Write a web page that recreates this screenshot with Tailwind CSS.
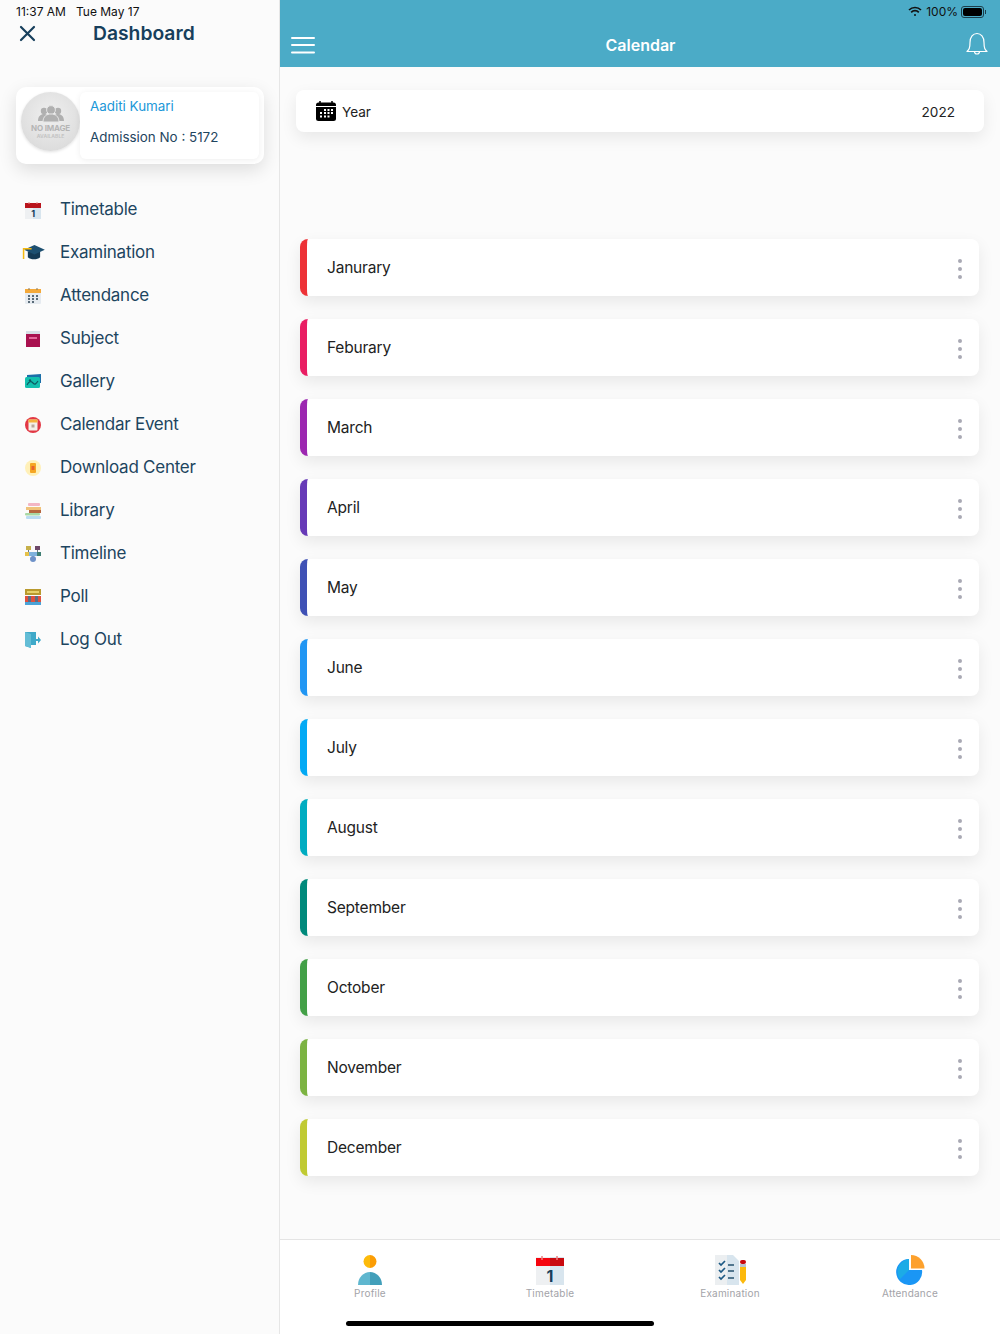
<!DOCTYPE html>
<html lang="en">

<head>
    <meta charset="UTF-8" />
    <meta name="viewport" content="width=device-width, initial-scale=1" />
    <title>Calendar</title>
    <script src="https://cdn.jsdelivr.net/npm/@tailwindcss/browser@4"></script>
</head>

<body class="relative w-[1000px] h-[1334px] overflow-hidden flex bg-[#fbfbfb] font-['Inter',sans-serif] text-[#222]">

    <!-- sidebar -->
    <aside class="w-[280px] h-full shrink-0 border-r border-[#e6e6e6] bg-[#fbfbfb] flex flex-col">
        <div class="h-[24px] pl-4 pt-[4px] flex gap-[10px] text-[12px] leading-[15px] text-[#111]">
            <span>11:37 AM</span>
            <span>Tue May 17</span>
        </div>
        <div class="h-[20px] mt-[-1px] pl-[19px] flex items-center">
            <svg width="17" height="17" viewBox="0 0 17 17" fill="none" stroke="#173f5c" stroke-width="2.2" stroke-linecap="round">
                <path d="M2 2L15 15M15 2L2 15" />
            </svg>
            <span class="ml-[57px] text-[19.3px] leading-[24px] font-semibold text-[#173f5c]">Dashboard</span>
        </div>

        <div class="mt-[44px] mx-4 w-[248px] h-[77px] rounded-[10px] bg-white shadow-[0_6px_18px_rgba(0,0,0,0.12)] flex pl-[5px] pt-[5px]">
            <div class="w-[59px] h-[59px] rounded-full bg-[radial-gradient(circle_at_50%_40%,#f0f0f0,#d6d6d6)] shadow-[0_1px_3px_rgba(0,0,0,0.12)] flex flex-col items-center pt-[13px] shrink-0">
                <svg width="26" height="18" viewBox="0 0 26 18" fill="#b0b0b0">
                    <circle cx="6" cy="6" r="3.2" />
                    <circle cx="20" cy="6" r="3.2" />
                    <path d="M0 16c0-5 3-7 6-7s6 2 6 7zM14 16c0-5 3-7 6-7s6 2 6 7z" />
                    <circle cx="13" cy="5" r="4.4" stroke="#e6e6e6" />
                    <path d="M5 17c0-6 4-8 8-8s8 2 8 8z" stroke="#e6e6e6" />
                </svg>
                <span class="text-[8px] leading-[9px] mt-[1px] font-bold text-[#b5b5b5] whitespace-nowrap tracking-[-0.2px]">NO IMAGE</span>
                <span class="text-[5px] leading-[6px] font-bold text-[#c4c4c4]">AVAILABLE</span>
            </div>
            <div class="w-[179px] h-[67px] rounded-[6px] bg-white shadow-[0_1px_6px_rgba(0,0,0,0.07)] pl-[10px] pt-[6px]">
                <div class="text-[13.4px] leading-[17px] text-[#2097d8]">Aaditi Kumari</div>
                <div class="mt-[14px] text-[13.4px] leading-[17px] text-[#1f4560]">Admission No : 5172</div>
            </div>
        </div>

        <nav class="mt-[24px] flex flex-col text-[17px] tracking-[-0.25px] text-[#1d4560]">
            <a class="h-[43px] flex items-center">
                <span class="w-[60px] flex justify-center pl-[6px]">
                    <svg width="16" height="18" viewBox="0 0 16 18">
                        <rect y="2" width="8" height="16" fill="#eef0f2" />
                        <rect x="8" y="2" width="8" height="16" fill="#d8e5ee" />
                        <rect y="2" width="16" height="5" fill="#b9141c" />
                        <path d="M4 1v2M12 1v2" stroke="#e88" />
                        <text x="8" y="16" font-size="9" font-weight="700" text-anchor="middle" fill="#173f5c" font-family="Inter">1</text>
                    </svg>
                </span>Timetable
            </a>
            <a class="h-[43px] flex items-center">
                <span class="w-[60px] flex justify-center pl-[6px]">
                    <svg width="23" height="17" viewBox="0 0 24 18">
                        <path d="M6 8v6c3 3 10 3 13 0V8z" fill="#153a55" />
                        <path d="M13 1L24 6 13 11 2 6z" fill="#1d4f70" />
                        <path d="M10 5H1.500v11" fill="none" stroke="#f5b90f" stroke-width="1.600" />
                    </svg>
                </span>Examination
            </a>
            <a class="h-[43px] flex items-center">
                <span class="w-[60px] flex justify-center pl-[6px]">
                    <svg width="16" height="16" viewBox="0 0 16 16">
                        <rect y="1" width="16" height="15" rx="1" fill="#e6ebf0" />
                        <rect y="1" width="16" height="4" fill="#f4a93a" />
                        <path d="M4 0v2M12 0v2" stroke="#8a7a5a" />
                        <path d="M3 7h2v2H3zM7 7h2v2H7zM11 7h2v2h-2zM3 10h2v2H3zM7 10h2v2H7zM11 10h2v2h-2zM3 13h2v2H3zM7 13h2v2H7z" fill="#5a6b78" />
                    </svg>
                </span>Attendance
            </a>
            <a class="h-[43px] flex items-center">
                <span class="w-[60px] flex justify-center pl-[6px]">
                    <svg width="14" height="16" viewBox="0 0 14 16">
                        <rect width="14" height="16" fill="#a9114f" />
                        <rect width="14" height="3" fill="#d7dfe6" />
                        <rect x="3" y="6" width="8" height="2" fill="#e4679b" />
                    </svg>
                </span>Subject
            </a>
            <a class="h-[43px] flex items-center">
                <span class="w-[60px] flex justify-center pl-[6px]">
                    <svg width="16" height="15" viewBox="0 0 16 15">
                        <path d="M2 1l14-1v9H2z" fill="#1b6fa8" />
                        <rect y="3" width="15" height="11" rx="1.500" fill="#13bfae" />
                        <path d="M2 11c2-4 4-4 6-2s3 1 5-2" fill="none" stroke="#0c5a62" stroke-width="1.200" />
                        <circle cx="5" cy="6.500" r="1.200" fill="#0c5a62" />
                    </svg>
                </span>Gallery
            </a>
            <a class="h-[43px] flex items-center">
                <span class="w-[60px] flex justify-center pl-[6px]">
                    <svg width="16" height="16" viewBox="0 0 16 16">
                        <circle cx="8" cy="8" r="8" fill="#e23744" />
                        <rect x="3.500" y="2.500" width="9" height="11" rx="1" fill="#f4f0e8" />
                        <rect x="3.500" y="2.500" width="9" height="3" fill="#f5b23c" />
                        <rect x="6.500" y="7.500" width="3" height="3" fill="#b9a89a" />
                    </svg>
                </span>Calendar Event
            </a>
            <a class="h-[43px] flex items-center">
                <span class="w-[60px] flex justify-center pl-[6px]">
                    <svg width="16" height="16" viewBox="0 0 16 16">
                        <circle cx="8" cy="8" r="8" fill="#fff0b8" />
                        <rect x="5" y="3" width="6" height="10" rx="1" fill="#f5a623" />
                        <rect x="6.500" y="6" width="3" height="4" fill="#e8622c" />
                    </svg>
                </span>Download Center
            </a>
            <a class="h-[43px] flex items-center">
                <span class="w-[60px] flex justify-center pl-[6px]">
                    <svg width="16" height="16" viewBox="0 0 16 16">
                        <rect x="3" y="0" width="12" height="3" rx="1" fill="#f3b6c4" />
                        <rect x="1" y="4" width="15" height="3" fill="#f0c27a" />
                        <rect x="4" y="7" width="12" height="3" fill="#b5673f" />
                        <rect y="10" width="15" height="2.500" rx="1" fill="#a9d8a4" />
                        <rect x="1" y="13" width="15" height="3" rx="1" fill="#b9dcf2" />
                    </svg>
                </span>Library
            </a>
            <a class="h-[43px] flex items-center">
                <span class="w-[60px] flex justify-center pl-[6px]">
                    <svg width="16" height="16" viewBox="0 0 16 16">
                        <path d="M3.500 4v4M12.500 4v4M8 10v2" stroke="#6c7a86" />
                        <rect x="1" y="0" width="5" height="4" fill="#c6b04a" />
                        <rect x="10" y="0" width="5" height="4" fill="#6d4868" />
                        <rect y="6" width="16" height="4" fill="#7fb2dd" />
                        <rect y="6" width="4" height="4" fill="#e6c24a" />
                        <rect x="12" y="6" width="4" height="4" fill="#3f7f73" />
                        <circle cx="8" cy="13" r="3" fill="#6e92c8" />
                    </svg>
                </span>Timeline
            </a>
            <a class="h-[43px] flex items-center">
                <span class="w-[60px] flex justify-center pl-[6px]">
                    <svg width="16" height="16" viewBox="0 0 16 16">
                        <rect width="16" height="6" fill="#b99a2e" />
                        <rect x="2" y="2" width="12" height="2" fill="#e8d26a" />
                        <rect y="7" width="16" height="6" fill="#e0503f" />
                        <rect x="3" y="7" width="3" height="6" fill="#5b6d84" />
                        <rect x="10" y="7" width="3" height="6" fill="#5b6d84" />
                        <rect y="13" width="16" height="3" fill="#4aa3d8" />
                    </svg>
                </span>Poll
            </a>
            <a class="h-[43px] flex items-center">
                <span class="w-[60px] flex justify-center pl-[6px]">
                    <svg width="16" height="16" viewBox="0 0 16 16">
                        <path d="M0 0h11v13H6v3l-6-2z" fill="#3fa9c9" />
                        <path d="M6 2L0 0v14l6 2z" fill="#63bdd6" />
                        <path d="M9 7h4V4.500L16 8l-3 3.500V9H9z" fill="#3fa9c9" />
                    </svg>
                </span>Log Out
            </a>
        </nav>
    </aside>

    <!-- main -->
    <main class="flex-1 h-full flex flex-col">
        <header class="h-[67px] shrink-0 bg-[#4babc7] relative flex items-end justify-between text-white pb-[11px] px-[11px]">
            <svg width="24" height="18" viewBox="0 0 24 18" class="mb-[1px]" fill="#fff">
                <rect y="0" width="24" height="2" rx="1" />
                <rect y="7" width="24" height="2" rx="1" />
                <rect y="14.500" width="24" height="2" rx="1" />
            </svg>
            <span class="text-[16px] leading-[22px] font-semibold">Calendar</span>
            <svg width="22" height="24" viewBox="0 0 22 24" fill="none" stroke="#fff" stroke-width="1.200" class="mr-[1px]">
                <path d="M1 19.500c2-2 3-3 3-9C4 5 7 1.500 11 1.500S18 5 18 10.500c0 6 1 7 3 9z" stroke-linejoin="round" />
                <path d="M8.500 19.500a2.500 2.500 0 0 0 5 0" />
            </svg>
            <div class="absolute right-[14px] top-[4px] flex items-center text-[12px] leading-[15px] text-[#111]">
                <svg width="14" height="11" viewBox="0 0 14 11" fill="none" stroke="#111" stroke-width="1.700" class="mr-[4px]">
                    <path d="M1 4a8.500 8.500 0 0 1 12 0M3.200 6.300a5.300 5.300 0 0 1 7.600 0" />
                    <circle cx="7" cy="9" r="1" fill="#111" stroke="none" />
                </svg>
                <span>100%</span>
                <span class="ml-[3px] w-[23px] h-[12px] rounded-[3px] border border-[#1c3d4a] p-[1px] flex">
                    <span class="flex-1 bg-black rounded-[2px]"></span>
                </span>
                <span class="w-[1px] h-[4px] bg-[#1c3d4a] ml-[1px]"></span>
            </div>
        </header>

        <div class="mt-[23px] ml-[16px] w-[688px] h-[42px] rounded-[8px] bg-white shadow-[0_6px_16px_rgba(0,0,0,0.08)] flex items-center pl-[20px] pr-[29px] text-[13.6px] shrink-0">
            <svg width="20" height="20" viewBox="0 0 20 20">
                <rect y="1.500" width="20" height="18.500" rx="2.500" fill="#000" />
                <path d="M4 0v3M16 0v3" stroke="#000" stroke-width="1.500" />
                <rect y="5" width="20" height="1" fill="#fff" />
                <path d="M8 8h2v2H8zM11.500 8h2v2h-2zM15 8h2v2h-2zM4 11h2v2H4zM8 11h2v2H8zM11.500 11h2v2h-2zM15 11h2v2h-2zM4 14.500h2v2H4zM8 14.500h2v2H8zM11.500 14.500h2v2h-2z" fill="#fff" />
            </svg>
            <span class="ml-[6px] mt-[2px] text-[#222]">Year</span>
            <span class="ml-auto mt-[2px] text-[#222]">2022</span>
        </div>

        <ul class="mt-[107px] ml-[20px] w-[679px] flex flex-col gap-[23px] text-[15.5px] tracking-[-0.2px] leading-[20px] text-[#222]">
            <li class="h-[57px] rounded-[8px] bg-white border-l-[7px] border-[#ed3237] shadow-[0_6px_16px_rgba(0,0,0,0.08)] flex items-center pl-[20px] pr-[17px]">Janurary<span class="ml-auto flex flex-col gap-[4px] mt-[3px]"><i class="w-[4px] h-[4px] rounded-full bg-[#a9a9b4]"></i><i class="w-[4px] h-[4px] rounded-full bg-[#a9a9b4]"></i><i class="w-[4px] h-[4px] rounded-full bg-[#a9a9b4]"></i></span></li>
            <li class="h-[57px] rounded-[8px] bg-white border-l-[7px] border-[#e91e63] shadow-[0_6px_16px_rgba(0,0,0,0.08)] flex items-center pl-[20px] pr-[17px]">Feburary<span class="ml-auto flex flex-col gap-[4px] mt-[3px]"><i class="w-[4px] h-[4px] rounded-full bg-[#a9a9b4]"></i><i class="w-[4px] h-[4px] rounded-full bg-[#a9a9b4]"></i><i class="w-[4px] h-[4px] rounded-full bg-[#a9a9b4]"></i></span></li>
            <li class="h-[57px] rounded-[8px] bg-white border-l-[7px] border-[#9c27b0] shadow-[0_6px_16px_rgba(0,0,0,0.08)] flex items-center pl-[20px] pr-[17px]">March<span class="ml-auto flex flex-col gap-[4px] mt-[3px]"><i class="w-[4px] h-[4px] rounded-full bg-[#a9a9b4]"></i><i class="w-[4px] h-[4px] rounded-full bg-[#a9a9b4]"></i><i class="w-[4px] h-[4px] rounded-full bg-[#a9a9b4]"></i></span></li>
            <li class="h-[57px] rounded-[8px] bg-white border-l-[7px] border-[#673ab7] shadow-[0_6px_16px_rgba(0,0,0,0.08)] flex items-center pl-[20px] pr-[17px]">April<span class="ml-auto flex flex-col gap-[4px] mt-[3px]"><i class="w-[4px] h-[4px] rounded-full bg-[#a9a9b4]"></i><i class="w-[4px] h-[4px] rounded-full bg-[#a9a9b4]"></i><i class="w-[4px] h-[4px] rounded-full bg-[#a9a9b4]"></i></span></li>
            <li class="h-[57px] rounded-[8px] bg-white border-l-[7px] border-[#3f51b5] shadow-[0_6px_16px_rgba(0,0,0,0.08)] flex items-center pl-[20px] pr-[17px]">May<span class="ml-auto flex flex-col gap-[4px] mt-[3px]"><i class="w-[4px] h-[4px] rounded-full bg-[#a9a9b4]"></i><i class="w-[4px] h-[4px] rounded-full bg-[#a9a9b4]"></i><i class="w-[4px] h-[4px] rounded-full bg-[#a9a9b4]"></i></span></li>
            <li class="h-[57px] rounded-[8px] bg-white border-l-[7px] border-[#2196f3] shadow-[0_6px_16px_rgba(0,0,0,0.08)] flex items-center pl-[20px] pr-[17px]">June<span class="ml-auto flex flex-col gap-[4px] mt-[3px]"><i class="w-[4px] h-[4px] rounded-full bg-[#a9a9b4]"></i><i class="w-[4px] h-[4px] rounded-full bg-[#a9a9b4]"></i><i class="w-[4px] h-[4px] rounded-full bg-[#a9a9b4]"></i></span></li>
            <li class="h-[57px] rounded-[8px] bg-white border-l-[7px] border-[#03a9f4] shadow-[0_6px_16px_rgba(0,0,0,0.08)] flex items-center pl-[20px] pr-[17px]">July<span class="ml-auto flex flex-col gap-[4px] mt-[3px]"><i class="w-[4px] h-[4px] rounded-full bg-[#a9a9b4]"></i><i class="w-[4px] h-[4px] rounded-full bg-[#a9a9b4]"></i><i class="w-[4px] h-[4px] rounded-full bg-[#a9a9b4]"></i></span></li>
            <li class="h-[57px] rounded-[8px] bg-white border-l-[7px] border-[#00acc1] shadow-[0_6px_16px_rgba(0,0,0,0.08)] flex items-center pl-[20px] pr-[17px]">August<span class="ml-auto flex flex-col gap-[4px] mt-[3px]"><i class="w-[4px] h-[4px] rounded-full bg-[#a9a9b4]"></i><i class="w-[4px] h-[4px] rounded-full bg-[#a9a9b4]"></i><i class="w-[4px] h-[4px] rounded-full bg-[#a9a9b4]"></i></span></li>
            <li class="h-[57px] rounded-[8px] bg-white border-l-[7px] border-[#00897b] shadow-[0_6px_16px_rgba(0,0,0,0.08)] flex items-center pl-[20px] pr-[17px]">September<span class="ml-auto flex flex-col gap-[4px] mt-[3px]"><i class="w-[4px] h-[4px] rounded-full bg-[#a9a9b4]"></i><i class="w-[4px] h-[4px] rounded-full bg-[#a9a9b4]"></i><i class="w-[4px] h-[4px] rounded-full bg-[#a9a9b4]"></i></span></li>
            <li class="h-[57px] rounded-[8px] bg-white border-l-[7px] border-[#43a047] shadow-[0_6px_16px_rgba(0,0,0,0.08)] flex items-center pl-[20px] pr-[17px]">October<span class="ml-auto flex flex-col gap-[4px] mt-[3px]"><i class="w-[4px] h-[4px] rounded-full bg-[#a9a9b4]"></i><i class="w-[4px] h-[4px] rounded-full bg-[#a9a9b4]"></i><i class="w-[4px] h-[4px] rounded-full bg-[#a9a9b4]"></i></span></li>
            <li class="h-[57px] rounded-[8px] bg-white border-l-[7px] border-[#7cb342] shadow-[0_6px_16px_rgba(0,0,0,0.08)] flex items-center pl-[20px] pr-[17px]">November<span class="ml-auto flex flex-col gap-[4px] mt-[3px]"><i class="w-[4px] h-[4px] rounded-full bg-[#a9a9b4]"></i><i class="w-[4px] h-[4px] rounded-full bg-[#a9a9b4]"></i><i class="w-[4px] h-[4px] rounded-full bg-[#a9a9b4]"></i></span></li>
            <li class="h-[57px] rounded-[8px] bg-white border-l-[7px] border-[#c0ca33] shadow-[0_6px_16px_rgba(0,0,0,0.08)] flex items-center pl-[20px] pr-[17px]">December<span class="ml-auto flex flex-col gap-[4px] mt-[3px]"><i class="w-[4px] h-[4px] rounded-full bg-[#a9a9b4]"></i><i class="w-[4px] h-[4px] rounded-full bg-[#a9a9b4]"></i><i class="w-[4px] h-[4px] rounded-full bg-[#a9a9b4]"></i></span></li>
        </ul>

        <nav class="mt-auto h-[95px] shrink-0 bg-white border-t border-[#e4e4e4] grid grid-cols-4 pt-[15px] text-[10px] leading-[12px] tracking-[0.2px] text-[#a3a3a8]">
            <div class="flex flex-col items-center gap-[2px]">
                <svg width="26" height="30" viewBox="0 0 26 30">
                    <path d="M13 0a6.500 6.500 0 0 0 0 13z" fill="#fdbb0a" />
                    <path d="M13 0a6.500 6.500 0 0 1 0 13z" fill="#fb9d05" />
                    <path d="M1 30a12 13 0 0 1 12-13v13z" fill="#5fb7cf" />
                    <path d="M25 30a12 13 0 0 0-12-13v13z" fill="#429fba" />
                </svg>
                <span>Profile</span>
            </div>
            <div class="flex flex-col items-center gap-[2px]">
                <svg width="28" height="30" viewBox="0 0 28 30">
                    <rect y="2" width="14" height="28" fill="#eef0f2" />
                    <rect x="14" y="2" width="14" height="28" fill="#d8e5ee" />
                    <rect y="3" width="14" height="8" fill="#f5050e" />
                    <rect x="14" y="3" width="14" height="8" fill="#c90a0f" />
                    <path d="M6 1v4M21 1v4" stroke="#f08080" stroke-width="1.500" />
                    <text x="14" y="26.500" font-size="16" font-weight="700" text-anchor="middle" fill="#173f5c" font-family="Inter">1</text>
                </svg>
                <span>Timetable</span>
            </div>
            <div class="flex flex-col items-center gap-[2px]">
                <svg width="31" height="30" viewBox="0 0 31 30">
                    <path d="M0 0h12v30H0z" fill="#eceff1" />
                    <path d="M12 0h6l6 6v24H12z" fill="#d8e5ee" />
                    <path d="M4 8l2 2 4-4M4 15l2 2 4-4M4 22l2 2 4-4" fill="none" stroke="#1d5a85" stroke-width="1.700" />
                    <path d="M13 10h6M13 16h6M13 23h6" stroke="#24516f" stroke-width="1.700" />
                    <rect x="25" y="5" width="6" height="4" rx="2" fill="#c9060c" />
                    <rect x="25" y="9" width="6" height="3" fill="#b9c3cc" />
                    <path d="M25 12h6v13l-3 4-3-4z" fill="#fcb90c" />
                </svg>
                <span>Examination</span>
            </div>
            <div class="flex flex-col items-center gap-[2px]">
                <svg width="30" height="30" viewBox="0 0 30 30">
                    <path d="M14 4A13 13 0 1 0 27 15H14z" fill="#1a96f5" />
                    <path d="M14 4A13 13 0 0 0 4.800 24.200L14 15z" fill="#1cabe6" />
                    <path d="M16 0a13.500 13.500 0 0 1 13.500 13.500H16z" fill="#fda12d" />
                </svg>
                <span>Attendance</span>
            </div>
        </nav>
    </main>

    <!-- home indicator -->
    <div class="absolute left-[346px] top-[1321px] w-[308px] h-[5px] rounded-full bg-black"></div>
</body>

</html>
